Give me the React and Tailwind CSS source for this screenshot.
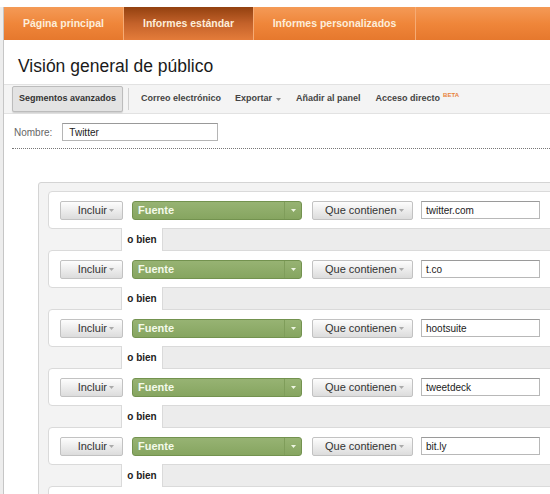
import React from "react";

const values = ["twitter.com", "t.co", "hootsuite", "tweetdeck", "bit.ly"];

function Arrow({ className = "" }) {
  return (
    <svg width="5" height="3" viewBox="0 0 5 3" className={className}>
      <path d="M0 0h5L2.5 3z" fill="currentColor" />
    </svg>
  );
}

function GrayButton({ label, className = "" }) {
  return (
    <div
      className={`h-[19px] flex items-center border border-[#c2c2c2] rounded-[2px] bg-gradient-to-b from-[#fdfdfd] to-[#dcdcdc] text-[11px] text-[#333] ${className}`}
    >
      <span>{label}</span>
      <Arrow className="ml-[2px] text-[#aaa]" />
    </div>
  );
}

function Row({ value }) {
  return (
    <div className="h-[38px] bg-white border border-[#dadada] rounded-[4px] flex items-center pl-[11px]">
      <GrayButton label="Incluir" className="w-[63px] justify-end pr-[8px]" />
      <div className="ml-[9px] w-[170px] h-[19px] flex items-center rounded-[3px] border border-[#73924f] bg-gradient-to-b from-[#97b373] to-[#86a560]">
        <span className="flex-1 pl-[5px] text-[11px] font-bold text-[#f4faea]">Fuente</span>
        <div className="w-[17px] h-full flex items-center justify-center border-l border-[#7f9d5a]">
          <Arrow className="text-[#eef5e2]" />
        </div>
      </div>
      <GrayButton label="Que contienen" className="ml-[10px] w-[101px] pl-[12px]" />
      <div className="ml-[8px] w-[119px] h-[18px] flex items-center bg-white border border-[#b8b8b8] border-t-[#9a9a9a] pl-[4px] text-[10px] text-[#222]">
        {value}
      </div>
    </div>
  );
}

function OBien() {
  return (
    <div className="relative z-10 -my-px h-[23px] flex">
      <div className="w-[73px]" />
      <div className="w-[42px] bg-white border-x border-[#dadada] flex items-center justify-center text-[10px] font-bold text-[#222]">
        o bien
      </div>
      <div className="flex-1 bg-[#ececec] border-y border-[#dadada]" />
    </div>
  );
}

export default function App() {
  const tabs = [
    { label: "Página principal", w: "w-[120px]", active: false },
    { label: "Informes estándar", w: "w-[130px]", active: true },
    { label: "Informes personalizados", w: "w-[162px]", active: false },
  ];

  return (
    <div className="w-[550px] h-[494px] overflow-hidden bg-white flex flex-col font-['Liberation_Sans',Arial,sans-serif]">
      <div className="h-[7px] shrink-0 bg-white" />
      <div className="flex flex-1 min-h-0">
        {/* left frame */}
        <div className="w-[4px] shrink-0 bg-[#ededed] border-r border-[#c6c6c6]" />

        <div className="flex-1 min-w-0 flex flex-col overflow-hidden">
          {/* nav */}
          <div className="h-[33px] shrink-0 flex bg-gradient-to-b from-[#f49a56] via-[#ef863a] to-[#e6782d]">
            {tabs.map((t) => (
              <div
                key={t.label}
                className={`${t.w} flex items-center justify-center text-[10.5px] font-bold text-[#fdeeda] border-r border-[#f6ab74] ${
                  t.active
                    ? "bg-gradient-to-b from-[#93410f] via-[#c4622a] to-[#e47c3a]"
                    : ""
                }`}
              >
                {t.label}
              </div>
            ))}
          </div>

          {/* title */}
          <div className="shrink-0 pt-[16px] pb-[8px] pl-[14px]">
            <h1 className="text-[17.5px] leading-[20px] text-[#1a1a1a]">Visión general de público</h1>
          </div>

          {/* toolbar */}
          <div className="h-[30px] shrink-0 flex items-center bg-[#f4f4f4] border-y border-[#e2e2e2] pl-[8px] text-[9px] font-bold text-[#444]">
            <div className="h-[26px] w-[111px] flex items-center justify-center bg-[#e3e3e3] border border-[#bcbcbc] rounded-[2px] shadow-[0_1px_1px_rgba(0,0,0,0.15)] text-[#333]">
              Segmentos avanzados
            </div>
            <div className="ml-[5px] w-px h-[22px] bg-[#d0d0d0]" />
            <span className="ml-[12px]">Correo electrónico</span>
            <span className="ml-[14px] flex items-center">
              Exportar
              <Arrow className="ml-[4px] text-[#888]" />
            </span>
            <span className="ml-[15px]">Añadir al panel</span>
            <span className="ml-[15px]">Acceso directo</span>
            <span className="ml-[3px] -mt-[8px] text-[6px] text-[#e8823a]">BETA</span>
          </div>

          {/* nombre */}
          <div className="shrink-0 flex items-center pl-[10px] pt-[9px]">
            <span className="text-[10px] text-[#666]">Nombre:</span>
            <div className="ml-[10px] w-[156px] h-[18px] flex items-center border border-[#b5b5b5] border-t-[#999] pl-[6px] text-[10px] text-[#222]">
              Twitter
            </div>
          </div>
          <div className="shrink-0 ml-[8px] mt-[7px] border-t border-dotted border-[#777]" />

          {/* segment conditions */}
          <div className="shrink-0 ml-[34px] mt-[33px] w-[600px] border border-[#d4d4d4] rounded-[3px] bg-[#f3f3f3] pt-[8px] pl-[9px]">
            {values.map((v, i) => (
              <div key={i}>
                <Row value={v} />
                <OBien />
              </div>
            ))}
            <div className="h-[38px] bg-white border border-[#dadada] rounded-[4px]" />
          </div>
        </div>
      </div>
    </div>
  );
}
